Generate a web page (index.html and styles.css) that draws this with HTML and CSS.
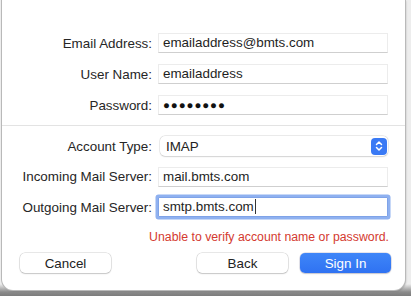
FILE: index.html
```html
<!DOCTYPE html>
<html>
<head>
<meta charset="utf-8">
<link rel="stylesheet" href="styles.css">
</head>
<body>
<div class="dialog">
  <div class="form top">
    <label class="label">Email Address:</label>
    <div class="field">emailaddress@bmts.com</div>
    <label class="label">User Name:</label>
    <div class="field">emailaddress</div>
    <label class="label">Password:</label>
    <div class="field dots">●●●●●●●●</div>
  </div>
  <div class="sep"></div>
  <div class="form bottom">
    <label class="label">Account Type:</label>
    <div class="popup">
      <span class="popup-text">IMAP</span>
      <span class="stepper">
        <svg width="10" height="12" viewBox="0 0 10 12"><path d="M2.5 4.5 L5 2 L7.5 4.5 M2.5 7.5 L5 10 L7.5 7.5" fill="none" stroke="#fff" stroke-width="1.5" stroke-linecap="round" stroke-linejoin="round"/></svg>
      </span>
    </div>
    <label class="label">Incoming Mail Server:</label>
    <div class="field">mail.bmts.com</div>
    <label class="label">Outgoing Mail Server:</label>
    <div class="field focus">smtp.bmts.com<span class="caret"></span></div>
  </div>
  <div class="error">Unable to verify account name or password.</div>
  <div class="buttons">
    <button class="btn">Cancel</button>
    <div class="spacer"></div>
    <button class="btn">Back</button>
    <button class="btn primary">Sign In</button>
  </div>
</div>
</body>
</html>
```
FILE: styles.css
```css
html, body {
  margin: 0;
  padding: 0;
}
body {
  width: 411px;
  height: 296px;
  overflow: hidden;
  background: linear-gradient(to bottom, #ededed 0, #ededed 284px, #8b8b8b 292px, #7c7c7c 296px);
  font-family: "Liberation Sans", Arial, sans-serif;
  color: #222;
}
.dialog {
  margin-left: 2px;
  width: 403px;
  height: 290px;
  background: #fff;
  border-radius: 0 0 11px 11px;
  box-shadow: 0 0 0 1px #b9b9b9, 1px 1px 2px rgba(0,0,0,0.25);
  box-sizing: border-box;
  padding-top: 33px;
}
.form {
  display: grid;
  grid-template-columns: 150px 230px;
  column-gap: 6px;
  align-items: center;
  grid-auto-rows: 20px;
}
.top {
  row-gap: 11px;
}
.bottom {
  row-gap: 10.5px;
  padding-top: 10px;
}
.label {
  text-align: right;
  font-size: 13.4px;
  color: #262626;
  white-space: nowrap;
}
.field {
  height: 20px;
  box-sizing: border-box;
  background: #fff;
  border: 1px solid #ececec;
  border-bottom-color: #cfcfcf;
  font-size: 13.4px;
  line-height: 18px;
  padding-left: 4px;
  color: #1e1e1e;
  white-space: nowrap;
}
.dots {
  font-size: 11.5px;
  letter-spacing: 0.9px;
  line-height: 18px;
  color: #111;
}
.focus {
  box-shadow: 0 0 0 2.5px #8fb1f0;
  border-color: #7fa3e8;
  border-radius: 1px;
}
.caret {
  display: inline-block;
  width: 1px;
  height: 15px;
  background: #333;
  vertical-align: -3px;
  margin-left: 1px;
}
.sep {
  margin-top: 10px;
  height: 1px;
  background: #e3e3e3;
}
.popup {
  margin-left: 2px;
  height: 20px;
  box-sizing: border-box;
  border-radius: 5px;
  background: #fff;
  box-shadow: 0 0 0 0.5px rgba(0,0,0,0.12), 0 0.5px 1.5px rgba(0,0,0,0.12);
  display: flex;
  align-items: center;
  justify-content: space-between;
  padding: 0 1px 0 6px;
  font-size: 13.4px;
}
.stepper {
  width: 16px;
  height: 17px;
  border-radius: 4px;
  background: #3a7af5;
  display: flex;
  align-items: center;
  justify-content: center;
}
.error {
  margin-top: 13px;
  font-size: 12.3px;
  line-height: 14px;
  color: #d43a30;
  text-align: right;
  padding-right: 16px;
}
.buttons {
  margin-top: 9px;
  display: flex;
  align-items: center;
  padding: 0 14px 0 18px;
  gap: 12px;
}
.spacer {
  flex: 1;
}
.btn {
  width: 91px;
  height: 20px;
  border: none;
  border-radius: 5px;
  background: #fff;
  box-shadow: 0 0 0 0.5px rgba(0,0,0,0.18), 0 1px 1.5px rgba(0,0,0,0.15);
  font-family: "Liberation Sans", Arial, sans-serif;
  font-size: 13.4px;
  color: #222;
  padding: 0;
}
.primary {
  background: linear-gradient(to bottom, #3f86f8, #2f72f2);
  color: #fff;
  box-shadow: 0 0 0 0.5px rgba(0,0,80,0.2), 0 1px 1.5px rgba(0,0,0,0.15);
}
```
